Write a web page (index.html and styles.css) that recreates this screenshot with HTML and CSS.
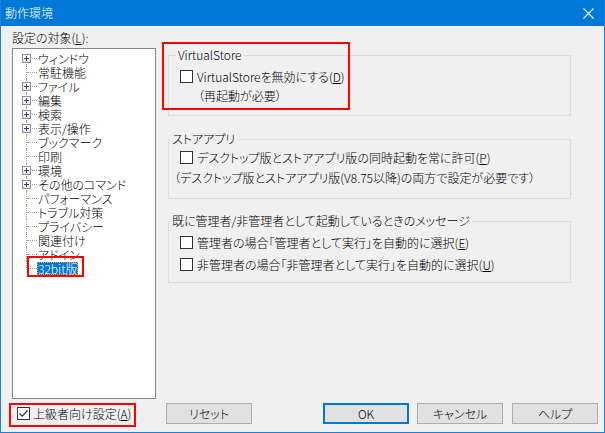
FILE: index.html
```html
<!DOCTYPE html>
<html lang="ja">
<head>
<meta charset="UTF-8" />
<title>動作環境</title>
<link rel="stylesheet" href="styles.css">
</head>
<body>

<div class="window">
  <div class="titlebar">
    <span class="title">動作環境</span>
    <svg class="close" width="11" height="11" viewBox="0 0 11 11">
      <path d="M0.5 0.5 L10.5 10.5 M10.5 0.5 L0.5 10.5" stroke="#fff" stroke-width="1.1" fill="none"/>
    </svg>
  </div>

  <div class="client">
    <div class="panes">
      <div class="left">
        <div class="caption">設定の対象(<u>L</u>):</div>
        <ul class="tree">
          <li class="node first"><span class="twig"><span class="plus"></span></span><span class="name">ウィンドウ</span></li>
          <li class="node"><span class="twig"></span><span class="name">常駐機能</span></li>
          <li class="node"><span class="twig"><span class="plus"></span></span><span class="name">ファイル</span></li>
          <li class="node"><span class="twig"><span class="plus"></span></span><span class="name">編集</span></li>
          <li class="node"><span class="twig"><span class="plus"></span></span><span class="name">検索</span></li>
          <li class="node"><span class="twig"><span class="plus"></span></span><span class="name">表示/操作</span></li>
          <li class="node"><span class="twig"></span><span class="name">ブックマーク</span></li>
          <li class="node"><span class="twig"></span><span class="name">印刷</span></li>
          <li class="node"><span class="twig"><span class="plus"></span></span><span class="name">環境</span></li>
          <li class="node"><span class="twig"><span class="plus"></span></span><span class="name">その他のコマンド</span></li>
          <li class="node"><span class="twig"></span><span class="name">パフォーマンス</span></li>
          <li class="node"><span class="twig"></span><span class="name">トラブル対策</span></li>
          <li class="node"><span class="twig"></span><span class="name">プライバシー</span></li>
          <li class="node"><span class="twig"></span><span class="name">関連付け</span></li>
          <li class="node"><span class="twig"></span><span class="name">アドイン</span></li>
          <li class="node last"><span class="twig"></span><span class="name selected">32bit版</span></li>
        </ul>
      </div>

      <div class="right">
        <fieldset class="group g-vs">
          <legend>VirtualStore</legend>
          <label class="check"><span class="box"></span>VirtualStoreを無効にする(<u>D</u>)</label>
          <div class="note">（再起動が必要）</div>
        </fieldset>

        <fieldset class="group g-store">
          <legend>ストアアプリ</legend>
          <label class="check"><span class="box"></span>デスクトップ版とストアアプリ版の同時起動を常に許可(<u>P</u>)</label>
          <div class="note wide">（デスクトップ版とストアアプリ版(V8.75以降)の両方で設定が必要です）</div>
        </fieldset>

        <fieldset class="group g-admin">
          <legend>既に管理者/非管理者として起動しているときのメッセージ</legend>
          <label class="check"><span class="box"></span>管理者の場合「管理者として実行」を自動的に選択(<u>E</u>)</label>
          <label class="check second"><span class="box"></span>非管理者の場合「非管理者として実行」を自動的に選択(<u>U</u>)</label>
        </fieldset>
      </div>
    </div>

    <div class="footer">
      <label class="check advanced"><span class="box checked">
        <svg width="11" height="11" viewBox="0 0 11 11"><path d="M1.5 5.5 L4.2 8.2 L9.5 2.5" stroke="#333" stroke-width="1.2" fill="none"/></svg>
      </span>上級者向け設定(<u>A</u>)</label>
      <button class="btn">リセット</button>
      <div class="spacer"></div>
      <button class="btn ok">OK</button>
      <button class="btn cancel">キャンセル</button>
      <button class="btn help">ヘルプ</button>
    </div>
  </div>

  <!-- 赤枠の注記 -->
  <div class="mark mark-vs"></div>
  <div class="mark mark-32"></div>
  <div class="mark mark-adv"></div>
</div>

</body>
</html>
```

FILE: styles.css
```css
body {
  margin: 0;
  font-family: "Noto Sans CJK JP", "Noto Sans", sans-serif;
  font-size: 12px;
  font-weight: 300;
  color: #000;
  background: #f0f0f0;
}
.window {
  position: relative;
  width: 605px;
  height: 433px;
  box-sizing: border-box;
  border: 1px solid #1a82d8;
  border-top: none;
  background: #f0f0f0;
  font-feature-settings: "palt";
}
.titlebar {
  display: flex;
  align-items: center;
  height: 26px;
  padding: 0 10px 0 4px;
  background: #0078d7;
  color: #fff;
}
.title {
  line-height: 16px;
}
.close {
  margin-left: auto;
}
.client {
  padding: 4px 0 0 11px;
}
.panes {
  display: flex;
}
.left {
  width: 144px;
}
.caption {
  height: 18px;
  line-height: 16px;
}
u {
  text-decoration: underline;
  text-underline-offset: 1px;
}
.tree {
  list-style: none;
  margin: 0;
  padding: 2px 0 0;
  width: 144px;
  height: 351px;
  box-sizing: border-box;
  border: 1px solid #828790;
  background: #fff;
}
.node {
  display: flex;
  align-items: center;
  height: 14px;
}
.twig {
  position: relative;
  width: 11px;
  height: 14px;
  margin-left: 13px;
}
.twig::before {
  content: "";
  position: absolute;
  left: 0;
  top: 0;
  bottom: 0;
  border-left: 1px dotted #a0a0a0;
}
.first .twig::before {
  top: 7px;
}
.last .twig::before {
  bottom: 7px;
}
.twig::after {
  content: "";
  position: absolute;
  left: 1px;
  top: 7px;
  width: 10px;
  border-top: 1px dotted #a0a0a0;
}
/* 展開ボタン */
.plus {
  position: absolute;
  z-index: 1;
  left: -4px;
  top: 3px;
  width: 9px;
  height: 9px;
  box-sizing: border-box;
  border: 1px solid #8f8f8f;
  background: linear-gradient(#fff, #e6e6e6);
}
.plus::before,
.plus::after {
  content: "";
  position: absolute;
  background: #24408a;
}
.plus::before {
  left: 1px;
  top: 3px;
  width: 5px;
  height: 1px;
}
.plus::after {
  left: 3px;
  top: 1px;
  width: 1px;
  height: 5px;
}
.name {
  line-height: 13px;
  padding: 0 1px;
  white-space: nowrap;
}
.selected {
  background: #0078d7;
  color: #fff;
  outline: 1px dotted #e9a23b;
  outline-offset: -1px;
}
.right {
  margin-left: 12px;
  padding-top: 18px;
}
.group {
  width: 403px;
  box-sizing: border-box;
  margin: 0;
  padding: 0 0 0 11px;
  border: 1px solid #dcdcdc;
  min-width: 0;
}
.group legend {
  line-height: 14px;
  padding: 0 2px;
  margin-left: -10px;
  white-space: nowrap;
}
.g-vs {
  padding-top: 7px;
  padding-bottom: 12px;
}
.g-vs legend {
  margin-left: -4px;
}
.g-vs .note {
  margin-top: 6px;
  padding-left: 18px;
}
.g-store {
  margin-top: 16px;
  padding-top: 4px;
  padding-bottom: 13px;
}
.g-store .note {
  margin-top: 7px;
  margin-left: -6px;
}
.g-admin {
  margin-top: 15px;
  padding-top: 7px;
  padding-bottom: 11px;
}
.g-admin .second {
  margin-top: 8px;
}
.check {
  display: flex;
  align-items: center;
  height: 14px;
  white-space: nowrap;
}
.note {
  line-height: 14px;
  white-space: nowrap;
}
.box {
  display: flex;
  align-items: center;
  justify-content: center;
  width: 13px;
  height: 13px;
  box-sizing: border-box;
  margin-right: 4px;
  border: 1px solid #333;
  background: #fff;
}
.footer {
  display: flex;
  align-items: center;
  height: 21px;
  margin-top: 4px;
  padding-right: 6px;
}
.advanced {
  width: 154px;
  padding-left: 5px;
  box-sizing: border-box;
}
.advanced .box {
  margin-right: 3px;
}
.btn {
  width: 86px;
  height: 21px;
  box-sizing: border-box;
  padding: 0;
  border: 1px solid #adadad;
  background: #e1e1e1;
  font: inherit;
  color: #000;
  line-height: 17px;
}
.ok {
  border: 2px solid #0078d7;
}
.cancel {
  margin-left: 8px;
}
.help {
  margin-left: 9px;
}
.spacer {
  flex: 1;
}
/* 赤枠 */
.mark {
  position: absolute;
  box-sizing: border-box;
  border: 2px solid #f00;
}
.mark-vs {
  left: 161px;
  top: 42px;
  width: 188px;
  height: 68px;
}
.mark-32 {
  left: 26px;
  top: 256px;
  width: 57px;
  height: 21px;
}
.mark-adv {
  left: 8px;
  top: 403px;
  width: 127px;
  height: 24px;
}
```
